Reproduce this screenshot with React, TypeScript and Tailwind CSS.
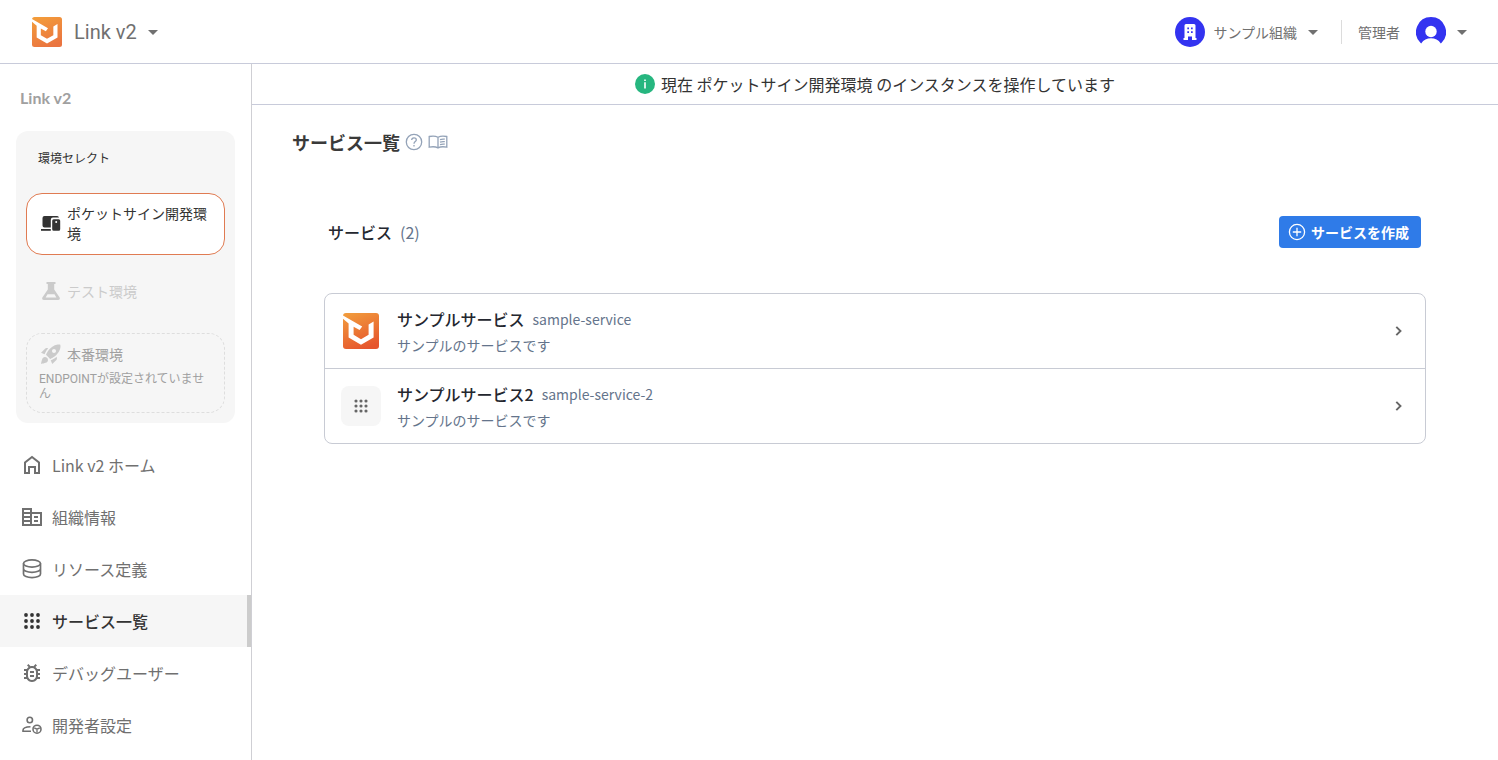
import { useState } from 'react';
import type { ReactNode } from 'react';
import { MdArrowDropDown, MdRocketLaunch } from 'react-icons/md';

interface IconProps {
  className?: string;
}

interface NavItem {
  label: string;
  icon: ReactNode;
}

interface Service {
  id: string;
  name: string;
  description: string;
  hasLogo: boolean;
}

function LogoIcon({ className, id, from, to }: IconProps & { id: string; from: string; to: string }) {
  return (
    <svg viewBox="0 0 36 36" className={className} aria-hidden="true">
      <defs>
        <linearGradient id={id} x1="0.2" y1="0" x2="0.6" y2="1">
          <stop offset="0" stopColor={from} />
          <stop offset="1" stopColor={to} />
        </linearGradient>
      </defs>
      <rect width="36" height="36" rx="3" fill={`url(#${id})`} />
      <path d="M0 2.400L19.200 13.600L16.600 17L10.600 13.800V21.800L18 26.200L25.600 21.800V11.500L30.600 8.500V24.600L18 31.800L5.600 24.600V10.600L0 5.800z" fill="#fff" />
    </svg>
  );
}

function AppsIcon({ className }: IconProps) {
  const steps = [6, 12, 18];
  return (
    <svg viewBox="0 0 24 24" fill="currentColor" className={className} aria-hidden="true">
      {steps.map(y => steps.map(x => <circle key={`${x}-${y}`} cx={x} cy={y} r="1.9" />))}
    </svg>
  );
}

function HomeIcon({ className }: IconProps) {
  return (
    <svg viewBox="0 0 24 24" fill="none" stroke="currentColor" strokeWidth="2" className={className} aria-hidden="true">
      <path d="M5 20V9.5L12 4l7 5.500V20h-4v-6H9v6z" />
    </svg>
  );
}

function OrganizationIcon({ className }: IconProps) {
  return (
    <svg viewBox="0 0 24 24" fill="currentColor" className={className} aria-hidden="true">
      <path d="M12 7V3H2v18h20V7H12zm-2 12H4v-2h6v2zm0-4H4v-2h6v2zm0-4H4V9h6v2zm0-4H4V5h6v2zm10 12h-8V9h8v10zm-2-8h-4v2h4v-2zm0 4h-4v2h4v-2z" />
    </svg>
  );
}

function DatabaseIcon({ className }: IconProps) {
  return (
    <svg viewBox="0 0 24 24" fill="none" stroke="currentColor" strokeWidth="1.700" className={className} aria-hidden="true">
      <ellipse cx="12" cy="6.500" rx="8.500" ry="3.600" />
      <path d="M3.500 6.500v10.500c0 2.100 3.800 3.600 8.500 3.600s8.500-1.500 8.500-3.600V6.500M3.500 11.700c0 2.100 3.800 3.600 8.500 3.600s8.500-1.500 8.500-3.600" />
    </svg>
  );
}

function BugIcon({ className }: IconProps) {
  return (
    <svg viewBox="0 0 24 24" fill="currentColor" className={className} aria-hidden="true">
      <path d="M20 8h-2.81c-.45-.78-1.07-1.45-1.82-1.96L17 4.41 15.59 3l-2.17 2.17C12.96 5.06 12.49 5 12 5s-.96.06-1.41.17L8.41 3 7 4.41l1.62 1.63C7.88 6.55 7.26 7.22 6.81 8H4v2h2.09c-.05.33-.09.66-.09 1v1H4v2h2v1c0 .34.04.67.09 1H4v2h2.81c1.04 1.79 2.97 3 5.19 3s4.15-1.21 5.19-3H20v-2h-2.09c.05-.33.09-.66.09-1v-1h2v-2h-2v-1c0-.34-.04-.67-.09-1H20V8zm-4 7c0 2.210-1.790 4-4 4s-4-1.790-4-4v-4c0-2.210 1.790-4 4-4s4 1.790 4 4v4zm-6-1h4v2h-4v-2zm0-4h4v2h-4v-2z" />
    </svg>
  );
}

function DeveloperIcon({ className }: IconProps) {
  return (
    <svg viewBox="0 0 24 24" fill="none" stroke="currentColor" strokeWidth="1.600" className={className} aria-hidden="true">
      <circle cx="9.800" cy="7" r="2.700" />
      <path d="M11 18.300H3v-1c0-2.400 2.800-3.400 7.500-3.500" />
      <circle cx="17" cy="16.200" r="4" />
      <path d="M14.200 14.800l2.800 1.400 2.800-1.400M17 16.200v3.400" strokeWidth="1.300" />
    </svg>
  );
}

function DevicesIcon({ className }: IconProps) {
  return (
    <svg viewBox="0 0 20 20" fill="currentColor" className={className} aria-hidden="true">
      <path d="M3.500 3h12.700a2 2 0 0 1 1.800 1.600h-6a2.200 2.200 0 0 0-2.200 2.200v7.700H3.500A2 2 0 0 1 1.500 12.500V5a2 2 0 0 1 2-2z" />
      <path d="M0 16h9.800v1.800H0z" />
      <path fillRule="evenodd" d="M12.700 6.200h5A1.500 1.500 0 0 1 19.200 7.700v8.600a1.500 1.500 0 0 1-1.500 1.500h-5a1.500 1.500 0 0 1-1.500-1.500V7.700a1.500 1.500 0 0 1 1.500-1.500zm2.500 1.900a1 1 0 1 0 0 2 1 1 0 0 0 0-2z" />
    </svg>
  );
}

function FlaskIcon({ className }: IconProps) {
  return (
    <svg viewBox="0 0 20 20" fill="currentColor" className={className} aria-hidden="true">
      <path fillRule="evenodd" d="M5.500 1h9v2h-1.300v5.500l5.300 7.700c.9 1.400.1 2.800-1.500 2.800H3c-1.600 0-2.400-1.400-1.500-2.800l5.300-7.700V3H5.500zM6.500 13.200L4.600 16.400h10.800l-1.900-3.200z" />
    </svg>
  );
}

function BuildingIcon({ className }: IconProps) {
  return (
    <svg viewBox="0 0 18 18" fill="currentColor" className={className} aria-hidden="true">
      <path fillRule="evenodd" d="M5 1h8a1.500 1.500 0 0 1 1.500 1.500V15H15.500v2H11v-3.500H7V17H2.500v-2H3.500V2.500A1.500 1.500 0 0 1 5 1zm1.300 3.500v1.700H8V4.500zm3.700 0v1.700h1.700V4.500zM6.300 8.300V10H8V8.300zm3.700 0V10h1.700V8.300z" />
    </svg>
  );
}

function AvatarIcon({ className }: IconProps) {
  return (
    <svg viewBox="0 0 30 30" className={className} aria-hidden="true">
      <path d="M15 0a15 15 0 0 1 10.800 25.400l-1 1C22.500 23 19 21.300 15 21.300S7.500 23 5.200 26.400l-1-1A15 15 0 0 1 15 0z" fill="#3333f0" />
      <circle cx="15" cy="14.500" r="5.700" fill="#fff" />
    </svg>
  );
}

function InfoIcon({ className }: IconProps) {
  return (
    <svg viewBox="0 0 20 20" className={className} aria-hidden="true">
      <circle cx="10" cy="10" r="10" fill="#26b67f" />
      <path d="M9.200 8.300h1.600V14.500H9.200zM9.200 5.500h1.600v1.600H9.200z" fill="#fff" />
    </svg>
  );
}

function HelpIcon({ className }: IconProps) {
  return (
    <svg viewBox="0 0 20 20" fill="none" stroke="currentColor" strokeWidth="1.300" className={className} aria-hidden="true">
      <circle cx="10" cy="10" r="7.700" />
      <path d="M7.700 8.100c0-1.400 1-2.300 2.300-2.300s2.300.9 2.300 2.100c0 1.600-2.300 1.800-2.300 3.800M10 13v1.400" />
    </svg>
  );
}

function BookIcon({ className }: IconProps) {
  return (
    <svg viewBox="0 0 20 20" fill="none" stroke="currentColor" strokeWidth="1.300" className={className} aria-hidden="true">
      <path d="M10 5.200C7.600 3.900 4 3.900 1.200 4.500v10.700c2.800-.6 6.400-.6 8.800.7 2.400-1.300 6-1.300 8.800-.7V4.500c-2.800-.6-6.400-.6-8.800.7zm0 0v10.700" />
      <path d="M12 7.600c1.600-.6 3.200-.7 4.800-.4M12 10.100c1.600-.6 3.200-.7 4.800-.4M12 12.600c1.600-.6 3.200-.7 4.800-.4" />
    </svg>
  );
}

function AddIcon({ className }: IconProps) {
  return (
    <svg viewBox="0 0 20 20" fill="none" stroke="currentColor" strokeWidth="1.300" className={className} aria-hidden="true">
      <circle cx="10" cy="10" r="7.600" />
      <path d="M10 5.800v8.400M5.800 10h8.400" />
    </svg>
  );
}

function ChevronIcon({ className }: IconProps) {
  return (
    <svg viewBox="0 0 20 20" fill="none" stroke="currentColor" strokeWidth="1.900" className={className} aria-hidden="true">
      <path d="M7.300 5.800l4.200 4.200-4.200 4.200" />
    </svg>
  );
}

const navItems: NavItem[] = [
  { label: 'Link v2 ホーム', icon: <HomeIcon className="size-6" /> },
  { label: '組織情報', icon: <OrganizationIcon className="size-6" /> },
  { label: 'リソース定義', icon: <DatabaseIcon className="size-6" /> },
  { label: 'サービス一覧', icon: <AppsIcon className="size-6" /> },
  { label: 'デバッグユーザー', icon: <BugIcon className="size-6" /> },
  { label: '開発者設定', icon: <DeveloperIcon className="size-6" /> },
];

const services: Service[] = [
  { id: 'sample-service', name: 'サンプルサービス', description: 'サンプルのサービスです', hasLogo: true },
  { id: 'sample-service-2', name: 'サンプルサービス2', description: 'サンプルのサービスです', hasLogo: false },
];

function Header() {
  return (
    <header className="flex h-16 items-center justify-between border-b border-[#c8cbda] pl-8 pr-6 text-[#707070]">
      <button type="button" className="flex items-center">
        <LogoIcon id="logo-header" from="#f39c3a" to="#ea7440" className="mr-3 size-[30px]" />
        <span className="font-[Roboto,sans-serif] text-xl">Link v2</span>
        <MdArrowDropDown className="ml-1 size-6" />
      </button>
      <div className="flex items-center text-sm">
        <button type="button" className="flex items-center">
          <span className="mr-2 flex size-[30px] items-center justify-center rounded-full bg-[#3333f0] text-white">
            <BuildingIcon className="size-[18px]" />
          </span>
          サンプル組織
          <MdArrowDropDown className="ml-1 size-6" />
        </button>
        <div className="mx-4 h-6 w-px bg-[#dcdcdc]" />
        <button type="button" className="flex items-center">
          管理者
          <AvatarIcon className="ml-4 mr-1 size-[30px]" />
          <MdArrowDropDown className="size-6" />
        </button>
      </div>
    </header>
  );
}

function EnvironmentSelect() {
  return (
    <section className="mx-4 rounded-xl bg-[#f6f6f6] px-[10px] pt-4 pb-[10px]">
      <h2 className="px-3 text-xs leading-[22px] text-[#333]">環境セレクト</h2>
      <button
        type="button"
        className="mt-6 flex w-full items-center gap-1.5 rounded-2xl border border-[#e07b52] bg-white px-[14px] pt-[9px] pb-[11px] text-left text-sm leading-5 text-[#333]"
      >
        <DevicesIcon className="size-5 shrink-0" />
        <span className="flex-1">ポケットサイン開発環境</span>
      </button>
      <button
        type="button"
        disabled
        className="mt-4 flex w-full items-center gap-1.5 px-[15px] py-2 text-left text-sm leading-6 text-[#cbcbcb]"
      >
        <FlaskIcon className="size-5 shrink-0" />
        テスト環境
      </button>
      <button
        type="button"
        disabled
        className="mt-[22px] block w-full rounded-2xl border border-dashed border-[#dedede] px-3 pt-2 pb-[10px] text-left text-[#a0a0a0]"
      >
        <span className="flex items-center gap-1 text-sm leading-6">
          <MdRocketLaunch className="size-6 shrink-0 text-[#cbcbcb]" />
          本番環境
        </span>
        <span className="mt-1.5 block font-[Roboto,'Noto_Sans_CJK_JP',sans-serif] text-xs leading-[15px]">
          ENDPOINTが設定されていません
        </span>
      </button>
    </section>
  );
}

function Sidebar() {
  const [active, setActive] = useState('サービス一覧');

  return (
    <aside className="w-[252px] shrink-0 border-r border-[#cfcfd4]">
      <p className="px-5 pt-[22px] pb-[22px] font-[Lato,sans-serif] text-base leading-[23px] font-bold text-[#a0a0a0]">Link v2</p>
      <EnvironmentSelect />
      <nav className="mt-4">
        {navItems.map(item => (
          <a
            key={item.label}
            href="#"
            onClick={() => setActive(item.label)}
            className={
              item.label === active
                ? 'flex h-[52px] items-center gap-2 border-r-4 border-[#cccccc] bg-[#f6f6f6] pl-5 font-medium text-[#333]'
                : 'flex h-[52px] items-center gap-2 pl-5 text-[#707070]'
            }
          >
            {item.icon}
            {item.label}
          </a>
        ))}
      </nav>
    </aside>
  );
}

function ServiceRow({ service }: { service: Service }) {
  return (
    <li>
      <a href="#" className="flex h-[74px] items-center px-4">
        {service.hasLogo ? (
          <span className="flex size-10 items-center justify-center">
            <LogoIcon id={`logo-${service.id}`} from="#f19a3c" to="#e6552d" className="size-9" />
          </span>
        ) : (
          <span className="flex size-10 items-center justify-center rounded-lg bg-[#f6f6f6] text-[#666]">
            <AppsIcon className="size-5" />
          </span>
        )}
        <div className="ml-4 flex-1 pt-0.5">
          <div className="flex items-center gap-2 leading-[26px]">
            <span className="font-medium text-[#24272f]">{service.name}</span>
            <span className="text-sm leading-[26px] text-[#64748b]">{service.id}</span>
          </div>
          <p className="text-sm leading-[26px] text-[#64748b]">{service.description}</p>
        </div>
        <ChevronIcon className="size-5 text-[#666]" />
      </a>
    </li>
  );
}

export default function App() {
  return (
    <div className="flex min-h-screen flex-col bg-white font-['Noto_Sans_CJK_JP',sans-serif]" lang="ja">
      <Header />
      <div className="flex flex-1">
        <Sidebar />
        <main className="flex-1">
          {/* Current instance */}
          <div className="flex h-[41px] items-center justify-center gap-1.5 border-b border-[#c8cbda] text-[#333]">
            <InfoIcon className="size-5" />
            <p>現在 ポケットサイン開発環境 のインスタンスを操作しています</p>
          </div>

          <div className="px-10 pt-[23px]">
            <div className="flex items-center gap-1 text-[#94a3b8]">
              <h1 className="text-lg font-bold text-[#3a3a3a]">サービス一覧</h1>
              <button type="button" aria-label="ヘルプ">
                <HelpIcon className="size-5" />
              </button>
              <button type="button" aria-label="ドキュメント">
                <BookIcon className="size-5" />
              </button>
            </div>

            <section className="px-8 pt-[60px]">
              <div className="flex items-center justify-between pl-1 pr-[5px]">
                <h2 className="flex gap-2 font-medium text-[#24272f]">
                  サービス
                  <span className="font-normal text-[#64748b]">(2)</span>
                </h2>
                <button
                  type="button"
                  className="flex h-8 items-center gap-1 rounded bg-[#2f7be8] pl-2 pr-3 text-sm font-bold text-white"
                >
                  <AddIcon className="size-5" />
                  サービスを作成
                </button>
              </div>

              <ul className="mt-[45px] divide-y divide-[#c8cbd4] rounded-lg border border-[#c8cbd4]">
                {services.map(service => (
                  <ServiceRow key={service.id} service={service} />
                ))}
              </ul>
            </section>
          </div>
        </main>
      </div>
    </div>
  );
}
